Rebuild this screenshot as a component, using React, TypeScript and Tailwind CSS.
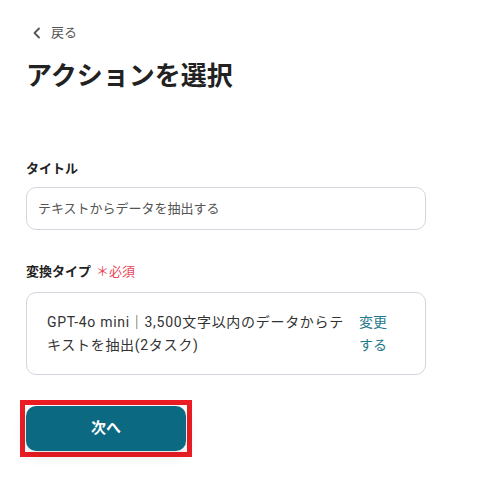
export default function App() {
  return (
    <div
      className="min-h-screen bg-white pl-[26px] pr-[52px] pt-[24px] text-[#333]"
      style={{ fontFamily: 'Roboto, "Noto Sans CJK JP", "Noto Sans", sans-serif' }}
    >
      <button className="flex items-center gap-[9px] text-[13px] leading-[18px] text-[#555]">
        <svg width="10" height="12" viewBox="0 0 10 12" className="ml-[6px]">
          <path d="M7 1.5 L2.5 6 L7 10.5" fill="none" stroke="#555" strokeWidth="1.8" strokeLinecap="round" strokeLinejoin="round" />
        </svg>
        戻る
      </button>

      <h1 className="mt-[16px] text-[26px] font-bold leading-[36px] text-[#222]">アクションを選択</h1>

      <div className="mt-[66px]">
        <label className="block text-[13px] font-bold leading-[18px] text-[#222]">タイトル</label>
        <div className="mt-[9px] flex h-[43px] items-center rounded-[10px] border border-[#d3d6dd] px-[11px] text-[13px] text-[#555]">
          テキストからデータを抽出する
        </div>
      </div>

      <div className="mt-[33px]">
        <label className="flex items-center text-[13px] font-bold leading-[18px] text-[#222]">
          変換タイプ
          <span className="ml-[5px] text-[13px] font-normal text-[#e8445a]">＊必須</span>
        </label>
        <div className="mt-[11px] flex h-[83px] items-center justify-between rounded-[10px] border border-[#d3d6dd] pl-[20px] pr-[36px] text-[14px] leading-[23px]">
          <p className="w-[302px] tracking-[0.7px] text-[#333]">GPT-4o mini｜3,500文字以内のデータからテキストを抽出(2タスク)</p>
          <button className="w-[30px] text-left text-[14px] leading-[23px] text-[#1f7a8c]">変更する</button>
        </div>
      </div>

      <div className="mt-[25px] ml-[-6px] inline-block border-[5px] border-[#ec1c24] p-[1px]">
        <button className="h-[45px] w-[160px] rounded-[10px] bg-[#0b6a82] text-[15px] font-bold text-white shadow-[0_4px_14px_rgba(0,0,0,0.12)]">
          次へ
        </button>
      </div>
    </div>
  )
}
